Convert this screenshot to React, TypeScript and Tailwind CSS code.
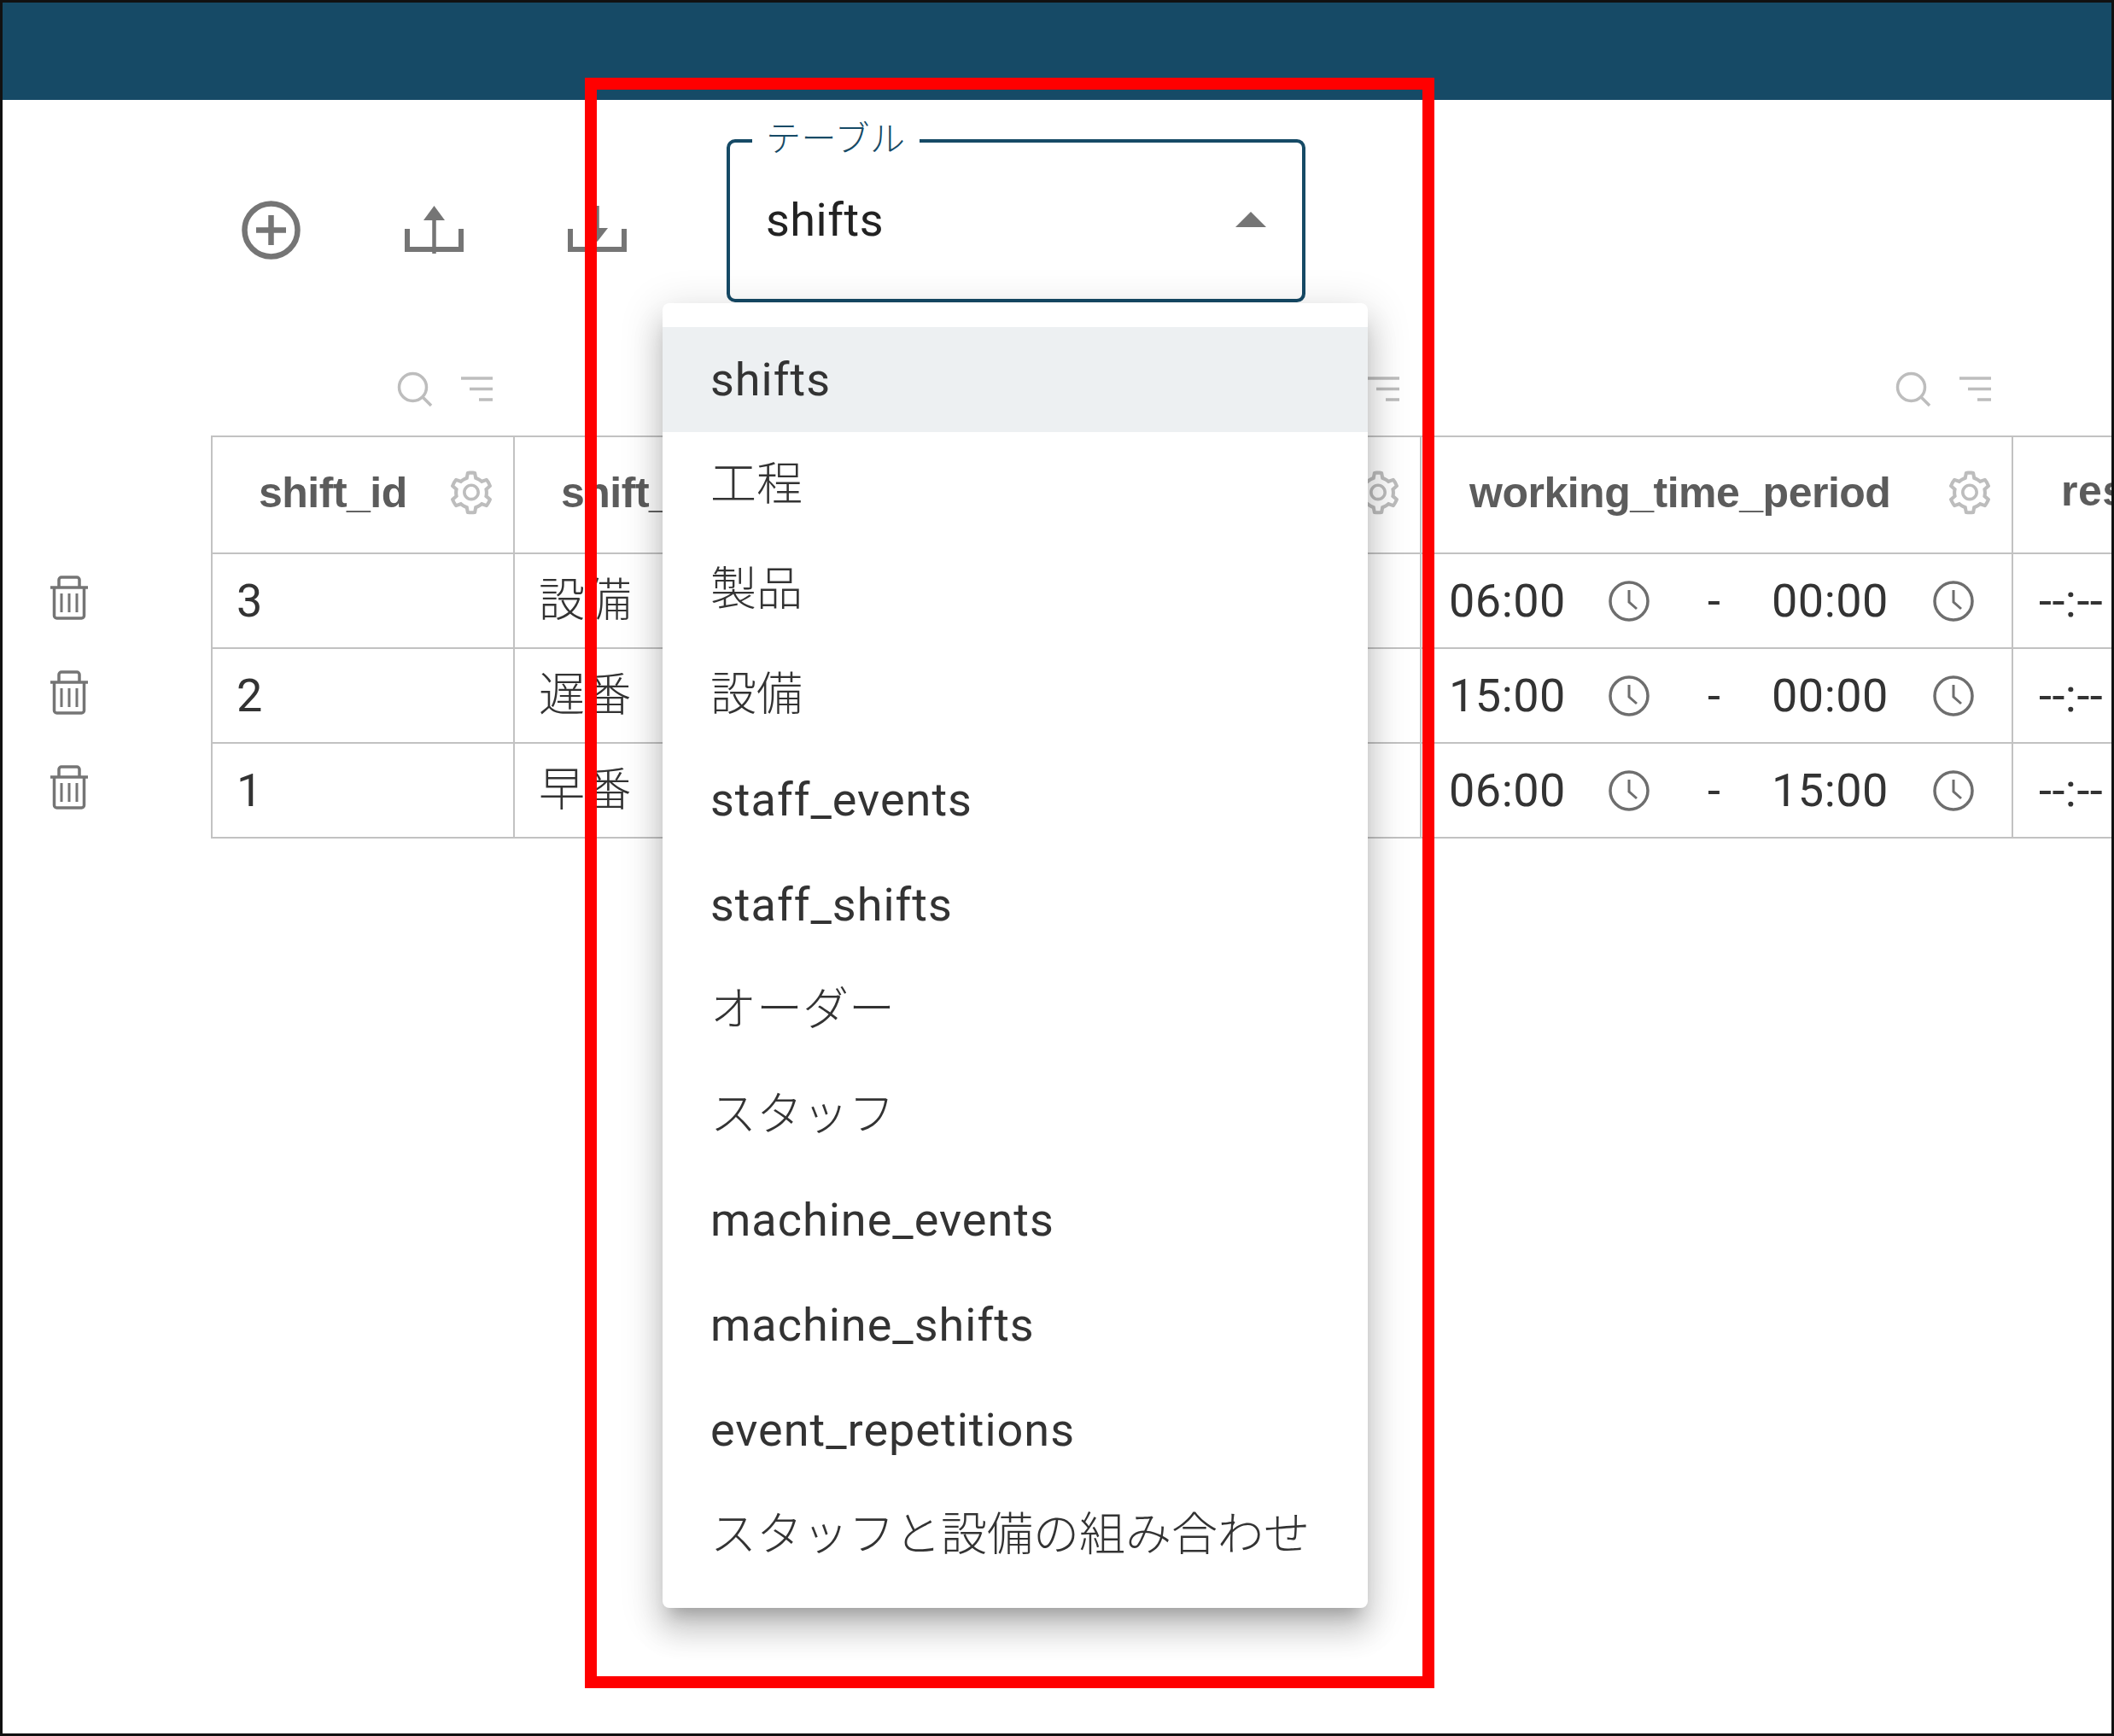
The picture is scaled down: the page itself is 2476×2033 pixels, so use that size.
import { AiOutlineSetting } from "react-icons/ai";

const font = "font-['Roboto','Noto_Sans_CJK_JP',sans-serif]";

function Plus() {
  return (
    <svg width="81" height="81" viewBox="0 0 81 81" fill="none" stroke="#757575" strokeWidth="6.5">
      <circle cx="40.5" cy="40.5" r="31" />
      <path d="M40.5 23v35M23 40.5h35" />
    </svg>
  );
}
function Upload() {
  return (
    <svg width="81" height="81" viewBox="0 0 81 81" fill="none">
      <path d="M9 39v24h63V39" stroke="#757575" strokeWidth="6" />
      <path d="M40.5 68V22" stroke="#757575" strokeWidth="4.5" />
      <path d="M28 29L40.5 12L53 29Z" fill="#757575" />
    </svg>
  );
}
function Download() {
  return (
    <svg width="81" height="81" viewBox="0 0 81 81" fill="none">
      <path d="M9 39v24h63V39" stroke="#757575" strokeWidth="6" />
      <path d="M40.5 12V48" stroke="#757575" strokeWidth="4.5" />
      <path d="M28 38L40.5 54L53 38Z" fill="#757575" />
    </svg>
  );
}
function Search() {
  return (
    <svg width="42" height="42" viewBox="0 0 42 42" fill="none" stroke="#bdbdbd" strokeWidth="3.5">
      <circle cx="18.5" cy="18.5" r="16" />
      <path d="M30 30l10 10" />
    </svg>
  );
}
function Filter() {
  return (
    <svg width="37" height="30" viewBox="0 0 37 30" fill="none" stroke="#bdbdbd" strokeWidth="3.5">
      <path d="M0 2h37M10 14.5h27M21 27h16" />
    </svg>
  );
}
function Trash() {
  return (
    <svg width="46" height="52" viewBox="0 0 46 52" fill="none" stroke="#757575" strokeWidth="3.5">
      <path d="M1 14h44" />
      <path d="M11 14V5a3 3 0 0 1 3-3h18a3 3 0 0 1 3 3v9" />
      <path d="M5.500 14v33a3 3 0 0 0 3 3h29a3 3 0 0 0 3-3V14" />
      <path d="M14 21v22M23 21v22M32 21v22" strokeWidth="3" />
    </svg>
  );
}
function Clock() {
  return (
    <svg width="48" height="48" viewBox="0 0 48 48" fill="none" stroke="#6e6e6e" strokeWidth="3.5" className="shrink-0">
      <circle cx="24" cy="24" r="22" />
      <path d="M24 11v14l9 8" strokeWidth="3" />
    </svg>
  );
}
function Gear() {
  return <AiOutlineSetting size={58} color="#bdbdbd" className="shrink-0" />;
}

function FilterGroup({ width }: { width: string }) {
  return (
    <div className={`${width} shrink-0 flex items-center justify-end gap-[33px] pr-[26px] h-[42px]`}>
      <Search />
      <Filter />
    </div>
  );
}

function Th({ width, label, pad }: { width: string; label: string; pad: string }) {
  return (
    <div className={`${width} ${pad} shrink-0 h-full flex items-center justify-between border-r-2 border-[#c2c2c2] pr-[20px] text-[#5c5c5c] text-[50px] font-bold font-['Liberation_Sans',sans-serif] tracking-[-0.5px]`}>
      <span className="-mt-[4px]">{label}</span>
      <span className="-mt-[6px]"><Gear /></span>
    </div>
  );
}

function Time({ a, b }: { a: string; b: string }) {
  return (
    <div className="w-[693px] shrink-0 h-full flex items-center border-r-2 border-[#c2c2c2] pl-[32px]">
      <span className="w-[187px]">{a}</span>
      <Clock />
      <span className="w-[143px] pl-[68px]">-</span>
      <span className="w-[189px]">{b}</span>
      <Clock />
    </div>
  );
}

const rows = [
  { id: "3", name: "設備", a: "06:00", b: "00:00" },
  { id: "2", name: "遅番", a: "15:00", b: "00:00" },
  { id: "1", name: "早番", a: "06:00", b: "15:00" },
];

const menu: [string, boolean][] = [
  ["shifts", false],
  ["工程", true],
  ["製品", true],
  ["設備", true],
  ["staff_events", false],
  ["staff_shifts", false],
  ["オーダー", true],
  ["スタッフ", true],
  ["machine_events", false],
  ["machine_shifts", false],
  ["event_repetitions", false],
  ["スタッフと設備の組み合わせ", true],
];

export default function App() {
  return (
    <div className={`relative w-[2476px] h-[2033px] bg-white border-[3px] border-[#111] overflow-hidden ${font}`}>
      <div className="h-[114px] bg-[#164a66]" />

      <div className="flex items-start pt-[46px] h-[237px]">
        <div className="flex mt-[66px] ml-[274px] gap-[110px] w-[574px]">
          <Plus />
          <Upload />
          <Download />
        </div>
        <div className="relative w-[678px] h-[191px] border-4 border-[#164a66] rounded-[10px] flex items-center justify-between pl-[42px] pr-[42px] text-[54px] text-[#222] tracking-[0.5px]">
          <span className="-mt-[2px] leading-none">shifts</span>
          <svg width="36" height="18" viewBox="0 0 36 18" className="-mt-[4px]"><path d="M0 18L18 0L36 18Z" fill="#757575" /></svg>
          <span className="absolute left-[26px] -top-[29px] bg-white px-[16px] text-[41px] leading-[50px] font-light text-[#164a66]">テーブル</span>
        </div>
      </div>

      <div className="flex mt-[81px] h-[42px]">
        <div className="w-[244px] shrink-0" />
        <FilterGroup width="w-[356px]" />
        <FilterGroup width="w-[1062px]" />
        <FilterGroup width="w-[693px]" />
      </div>

      <div className="mt-[33px] text-[54px] text-[#333] tracking-[0.5px]">
        <div className="flex h-[139px]">
          <div className="w-[244px] shrink-0" />
          <div className="flex flex-1 border-y-2 border-l-2 border-[#c2c2c2]">
            <Th width="w-[354px]" label="shift_id" pad="pl-[54px]" />
            <Th width="w-[1062px]" label="shift_name" pad="pl-[54px]" />
            <Th width="w-[693px]" label="working_time_period" pad="pl-[56px]" />
            <div className="pl-[56px] text-[50px] font-bold text-[#5c5c5c] font-['Liberation_Sans',sans-serif] flex items-center h-full -mt-[4px]">res</div>
          </div>
        </div>
        {rows.map((r) => (
          <div key={r.id} className="flex h-[111px]">
            <div className="w-[244px] shrink-0 flex items-center pl-[55px] pb-[10px]"><Trash /></div>
            <div className="flex flex-1 border-b-2 border-l-2 border-[#c2c2c2] whitespace-nowrap overflow-hidden">
              <div className="w-[354px] shrink-0 h-full flex items-center border-r-2 border-[#c2c2c2] pl-[28px]">{r.id}</div>
              <div className="w-[1062px] shrink-0 h-full flex items-center border-r-2 border-[#c2c2c2] pl-[28px] font-light">{r.name}</div>
              <Time a={r.a} b={r.b} />
              <div className="h-full flex items-center pl-[30px]">--:--</div>
            </div>
          </div>
        ))}
      </div>

      <div className="absolute left-[773px] top-[352px] w-[826px] h-[1528px] bg-white rounded-[8px] pt-[28px] shadow-[0_17px_17px_-10px_rgba(0,0,0,0.2),0_27px_34px_3px_rgba(0,0,0,0.14),0_10px_48px_7px_rgba(0,0,0,0.12)]">
        {menu.map(([t, jp], i) => (
          <div
            key={t}
            className={`h-[123px] flex items-center pl-[56px] text-[54px] whitespace-nowrap ${jp ? "font-light text-[#333]" : "text-[#333] tracking-[1px]"} ${i === 0 ? "bg-[#edf0f2]" : ""}`}
          >
            {t}
          </div>
        ))}
      </div>

      <div className="absolute left-[682px] top-[88px] w-[995px] h-[1886px] border-[14px] border-[#ff0000] pointer-events-none" />
    </div>
  );
}
